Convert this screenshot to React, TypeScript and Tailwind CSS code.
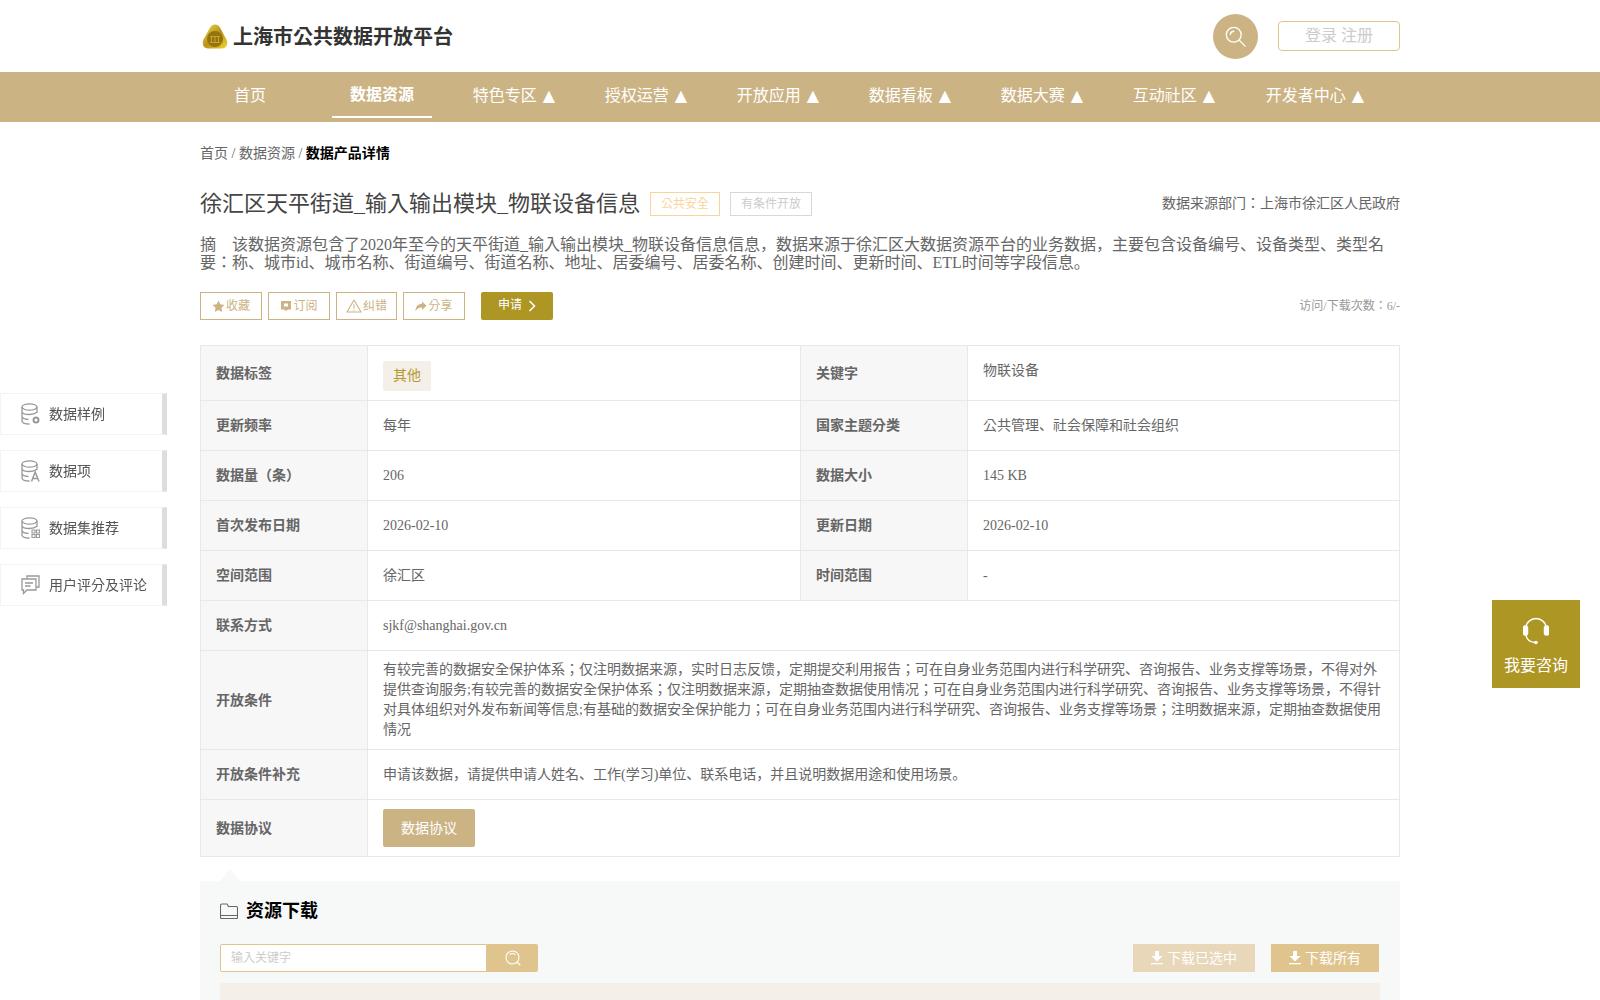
import React from "react";

const ROOT = "font-['Liberation_Serif','Noto_Sans_CJK_KR',serif]";

function Logo() {
  return (
    <svg width="26" height="25" viewBox="0 0 26 25" className="shrink-0 ml-[2px]">
      <defs>
        <linearGradient id="lg" x1="0" y1="0" x2="1" y2="1">
          <stop offset="0" stopColor="#f4e050" />
          <stop offset="0.5" stopColor="#b8921a" />
          <stop offset="1" stopColor="#f0d630" />
        </linearGradient>
      </defs>
      <path d="M13 .5c2.500 0 4 1.500 5.500 4l6 11c2 4 0 9-4.500 9H6c-4.500 0-6.500-5-4.500-9l6-11C9 2 10.500.5 13 .5z" fill="url(#lg)" />
      <circle cx="13" cy="15" r="8" fill="#94740f" />
      <path d="M8 12.500h10M9.500 12.500v6M13 12.500v6M16.500 12.500v6M8 18.500h10" stroke="#c9a42c" strokeWidth="1" fill="none" />
    </svg>
  );
}

function SearchIcon({ size = 21 }: { size?: number }) {
  return (
    <svg width={size} height={size} viewBox="0 0 24 24" fill="none" stroke="#fff" strokeWidth="1.500" strokeLinecap="round">
      <circle cx="10" cy="10" r="8.500" />
      <path d="M6 9.500A4.500 4.500 0 0 1 10 6M16 16L23 23" />
    </svg>
  );
}

const navs = ["特色专区", "授权运营", "开放应用", "数据看板", "数据大赛", "互动社区"];

function Tri() {
  return <span className="ml-[6px] font-['DejaVu_Sans',sans-serif]">▲</span>;
}

function Header() {
  return (
    <>
      <div className="w-[1200px] mx-auto h-[72px] flex items-center justify-between">
        <div className="flex items-center gap-[5px]">
          <Logo />
          <span className="pt-[2px] text-[20px] font-bold text-[#333]">上海市公共数据开放平台</span>
        </div>
        <div className="flex items-center gap-5">
          <div className="w-[45px] h-[45px] rounded-full bg-[#cbb384] flex items-center justify-center">
            <SearchIcon />
          </div>
          <div className="w-[122px] h-[30px] rounded-sm border border-[#e0c48e] text-[16px] text-[#ccc] flex items-center justify-center">登录 注册</div>
        </div>
      </div>
      <div className="h-[50px] bg-[#cbb384]">
        <div className="w-[1200px] mx-auto flex gap-8 text-white text-[16px]">
          <div className="w-[100px] h-[46px] pt-[2px] flex items-center justify-center">首页</div>
          <div className="w-[100px] h-[46px] pt-[1px] flex items-center justify-center font-bold border-b-2 border-white">数据资源</div>
          {navs.map((n) => (
            <div key={n} className="w-[100px] h-[46px] pt-[2px] flex items-center justify-center whitespace-nowrap">
              {n}
              <Tri />
            </div>
          ))}
          <div className="w-[118px] h-[46px] pt-[2px] flex items-center justify-center whitespace-nowrap">
            开发者中心
            <Tri />
          </div>
        </div>
      </div>
    </>
  );
}

function ActBtn({ icon, text, w }: { icon: React.ReactNode; text: string; w: string }) {
  return (
    <div className={`${w} h-[28px] border border-[#cbb384] text-[#cbb384] text-[12px] flex items-center justify-center gap-px`}>
      {icon}
      {text}
    </div>
  );
}

function Row({ children, h }: { children: React.ReactNode; h: string }) {
  return <div className={`flex border-b border-[#e8e8e8] last:border-b-0 ${h}`}>{children}</div>;
}

function Label({ children }: { children: React.ReactNode }) {
  return <div className="w-[167px] shrink-0 bg-[#f7f7f7] border-r border-[#e8e8e8] pl-[15px] flex items-center font-bold text-[14px] text-[#666]">{children}</div>;
}

function Value({ children }: { children: React.ReactNode }) {
  return <div className="flex-1 px-[15px] flex items-center text-[14px] text-[#666]">{children}</div>;
}

function Left({ children }: { children: React.ReactNode }) {
  return <div className="w-[433px] shrink-0 border-r border-[#e8e8e8] px-[15px] flex items-center text-[14px] text-[#666]">{children}</div>;
}

function Info() {
  return (
    <div className="border border-[#e8e8e8] mt-[25px]">
      <Row h="h-[55px]">
        <Label>数据标签</Label>
        <div className="w-[433px] shrink-0 border-r border-[#e8e8e8] px-[15px] pt-[15px]">
          <span className="inline-block h-[30px] px-[10px] leading-[30px] rounded-[2px] bg-[#f4efe8] text-[#b39a2e] text-[14px]">其他</span>
        </div>
        <Label>关键字</Label>
        <div className="flex-1 px-[15px] pt-[14px] text-[14px] text-[#666]">物联设备</div>
      </Row>
      <Row h="h-[50px]">
        <Label>更新频率</Label>
        <Left>每年</Left>
        <Label>国家主题分类</Label>
        <Value>公共管理、社会保障和社会组织</Value>
      </Row>
      <Row h="h-[50px]">
        <Label>数据量（条）</Label>
        <Left>206</Left>
        <Label>数据大小</Label>
        <Value>145 KB</Value>
      </Row>
      <Row h="h-[50px]">
        <Label>首次发布日期</Label>
        <Left>2026-02-10</Left>
        <Label>更新日期</Label>
        <Value>2026-02-10</Value>
      </Row>
      <Row h="h-[50px]">
        <Label>空间范围</Label>
        <Left>徐汇区</Left>
        <Label>时间范围</Label>
        <Value>-</Value>
      </Row>
      <Row h="h-[50px]">
        <Label>联系方式</Label>
        <Value>sjkf@shanghai.gov.cn</Value>
      </Row>
      <Row h="h-[99px]">
        <Label>开放条件</Label>
        <div className="flex-1 px-[15px] py-[9px] text-[14px] leading-[20px] text-[#666]">
          有较完善的数据安全保护体系；仅注明数据来源，实时日志反馈，定期提交利用报告；可在自身业务范围内进行科学研究、咨询报告、业务支撑等场景，不得对外提供查询服务;有较完善的数据安全保护体系；仅注明数据来源，定期抽查数据使用情况；可在自身业务范围内进行科学研究、咨询报告、业务支撑等场景，不得针对具体组织对外发布新闻等信息;有基础的数据安全保护能力；可在自身业务范围内进行科学研究、咨询报告、业务支撑等场景；注明数据来源，定期抽查数据使用情况
        </div>
      </Row>
      <Row h="h-[50px]">
        <Label>开放条件补充</Label>
        <Value>申请该数据，请提供申请人姓名、工作(学习)单位、联系电话，并且说明数据用途和使用场景。</Value>
      </Row>
      <Row h="h-[56px]">
        <Label>数据协议</Label>
        <div className="flex-1 px-[15px] flex items-center">
          <span className="w-[92px] h-[38px] rounded-[2px] bg-[#cbb384] text-white text-[14px] flex items-center justify-center">数据协议</span>
        </div>
      </Row>
    </div>
  );
}

const side = [
  { t: "数据样例", k: "gear" },
  { t: "数据项", k: "a" },
  { t: "数据集推荐", k: "grid" },
  { t: "用户评分及评论", k: "chat" },
];

function SideIcon({ k }: { k: string }) {
  if (k === "chat") {
    return (
      <svg width="19" height="20" viewBox="0 0 19 20" fill="none" stroke="#999" strokeWidth="1.300">
        <path d="M6 3.500V1h12v11h-2.500" />
        <path d="M1 4h14v11H6l-3.500 3.500V15H1z" />
        <path d="M4 8h8M4 11h5.500" />
      </svg>
    );
  }
  return (
    <svg width="19" height="22" viewBox="0 0 19 22" fill="none" stroke="#999" strokeWidth="1.300">
      <ellipse cx="8.500" cy="4" rx="7.500" ry="3.200" />
      <path d="M1 4v14c0 1.800 3 3 7.500 3M16 4v6M1 8.500c0 1.700 3 3 7.500 3 2.500 0 5.500-.6 7.500-2.200M1 13.500c0 1.500 2.500 2.700 6.500 3" />
      {k === "gear" && <circle cx="15" cy="17" r="2.500" strokeWidth="2" />}
      {k === "a" && <path d="M10.500 21.500l3.700-9.500 3.800 9.500M12 18.500h4.500" strokeWidth="1.500" />}
      {k === "grid" && <path d="M11 13h3v3h-3zM15.500 13h3v3h-3zM11 17.500h3v3h-3zM15.500 17.500h3v3h-3z" strokeWidth="1.100" />}
    </svg>
  );
}

function Sidebar() {
  return (
    <div className="fixed left-0 top-[393px] w-[167px] flex flex-col gap-[15px]">
      {side.map((s) => (
        <div key={s.t} className="h-[42px] border border-[#f3f3f3] border-r-[5px] border-r-[#dddddd] bg-white flex items-center pl-[20px] gap-[9px] text-[14px] text-[#555]">
          <SideIcon k={s.k} />
          <span>{s.t}</span>
        </div>
      ))}
    </div>
  );
}

function Download() {
  return (
    <svg width="12" height="14" viewBox="0 0 12 14" fill="#fff">
      <path d="M4 0h4v5h3.500L6 10.500.5 5H4z" />
      <rect x="0" y="12" width="12" height="1.300" />
    </svg>
  );
}

export default function App() {
  return (
    <div className={`${ROOT} h-[1000px] overflow-hidden bg-white relative`}>
      <Header />
      <div className="w-[1200px] mx-auto">
        <div className="mt-[24px] h-[16px] leading-[16px] text-[14px] text-[#666]">
          首页 / 数据资源 / <span className="font-bold text-black">数据产品详情</span>
        </div>
        <div className="mt-[28px] flex items-start h-[28px]">
          <span className="text-[22px] leading-[28px] text-[#444]">徐汇区天平街道_输入输出模块_物联设备信息</span>
          <span className="ml-[10px] mt-[2px] w-[70px] h-[24px] border border-[#fbd49b] text-[#fbd49b] text-[12px] flex items-center justify-center">公共安全</span>
          <span className="ml-[10px] mt-[2px] w-[82px] h-[24px] border border-[#d8d8d8] text-[#cccccc] text-[12px] flex items-center justify-center">有条件开放</span>
          <span className="ml-auto text-[14px] leading-[28px] text-[#666]">数据来源部门：上海市徐汇区人民政府</span>
        </div>
        <div className="mt-[18px] flex text-[16px] leading-[18px] text-[#666]">
          <div className="w-[32px] shrink-0">摘<br />要：</div>
          <div className="w-[1160px]">该数据资源包含了2020年至今的天平街道_输入输出模块_物联设备信息信息，数据来源于徐汇区大数据资源平台的业务数据，主要包含设备编号、设备类型、类型名称、城市id、城市名称、街道编号、街道名称、地址、居委编号、居委名称、创建时间、更新时间、ETL时间等字段信息。</div>
        </div>
        <div className="mt-[20px] flex items-center gap-[6px]">
          <ActBtn w="w-[62px]" text="收藏" icon={<svg width="13" height="13" viewBox="0 0 24 24" fill="#cbb384"><path d="M12 1l3.400 7 7.600 1-5.500 5.300 1.400 7.700L12 18.300 5.100 22l1.400-7.700L1 9l7.600-1z" /></svg>} />
          <ActBtn w="w-[62px]" text="订阅" icon={<svg width="12" height="12" viewBox="0 0 24 24"><path fillRule="evenodd" fill="#cbb384" d="M2 2h20v17h-6l-4 3-4-3H2zM8 7v6h8V7z" /></svg>} />
          <ActBtn w="w-[61px]" text="纠错" icon={<svg width="16" height="16" viewBox="0 0 24 24" fill="none" stroke="#cbb384" strokeWidth="1.600"><path d="M12 3L1.500 21h21zM12 9.500v6M12 17.500v1.500" /></svg>} />
          <ActBtn w="w-[62px]" text="分享" icon={<svg width="12" height="12" viewBox="0 0 24 24" fill="#cbb384"><path d="M14 3l9 8.500-9 8.500v-5C8 15 4 17 1 22c0-8 4-14 13-14.500z" /></svg>} />
          <div className="ml-[10px] w-[72px] h-[28px] rounded-[2px] bg-[#ae9625] text-white text-[12px] flex items-center justify-center gap-[6px] pb-[3px]">
            申请
            <svg width="8" height="12" viewBox="0 0 8 12" fill="none" stroke="#fff" strokeWidth="1.500" className="mt-[3px]"><path d="M1.500 1l5 5-5 5" /></svg>
          </div>
          <span className="ml-auto text-[12px] text-[#999]">访问/下载次数：6/-</span>
        </div>
        <Info />
        <div className="relative mt-[24px] h-[200px] bg-[#f7f9f9] px-[20px]">
          <div className="absolute left-[20px] -top-[12px] w-0 h-0 border-x-[10px] border-x-transparent border-b-[12px] border-b-[#f7f9f9]" />
          <div className="pt-[19px] h-[63px] flex items-start">
            <div className="flex items-center gap-[8px] h-[22px]">
              <svg width="18" height="16" viewBox="0 0 18 16" fill="none" stroke="#666" strokeWidth="1.100"><path d="M2 1h5l1.500 2.500H16a1.500 1.500 0 0 1 1.500 1.500v9.500a1 1 0 0 1-1 1h-15a1 1 0 0 1-1-1V2.500A1.500 1.500 0 0 1 2 1zM1 12.500h16" /></svg>
              <span className="text-[18px] font-bold text-black">资源下载</span>
            </div>
          </div>
          <div className="flex items-center h-[28px]">
            <div className="w-[267px] h-[28px] bg-white border border-[#e0c48e] rounded-l-[2px] pl-[10px] flex items-center text-[12px] text-[#ccc]">输入关键字</div>
            <div className="w-[51px] h-[28px] bg-[#e0c48e] rounded-r-[2px] flex items-center justify-center">
              <svg width="16" height="16" viewBox="0 0 16 16" fill="none" stroke="#fff" strokeWidth="1.100" strokeLinecap="round"><circle cx="7.500" cy="7.500" r="6.500" /><path d="M5 4.500A4 4 0 0 1 10 4.500M12 12l3 3" /></svg>
            </div>
            <div className="ml-auto w-[122px] h-[28px] bg-[#e8d7b9] text-white text-[14px] flex items-center justify-center gap-[4px]"><Download />下载已选中</div>
            <div className="ml-[16px] mr-px w-[108px] h-[28px] bg-[#e0c48e] text-white text-[14px] flex items-center justify-center gap-[4px]"><Download />下载所有</div>
          </div>
          <div className="mt-[11px] h-[40px] bg-[#f4efe8]" />
        </div>
      </div>
      <Sidebar />
      <div className="fixed left-[1492px] top-[600px] w-[88px] h-[88px] bg-[#ae9625] text-white text-[16px] flex flex-col items-center">
        <svg width="26" height="28" viewBox="0 0 26 28" fill="none" className="mt-[17px]" stroke="#fff" strokeWidth="1.500">
          <path d="M3 11a10 9.500 0 0 1 20 0" />
          <rect x="0.500" y="9" width="4" height="9" rx="2" fill="#fff" />
          <rect x="21.500" y="9" width="4" height="9" rx="2" fill="#fff" />
          <path d="M3 18c.5 4 4 7 9 7.500" />
          <circle cx="13" cy="25.500" r="1.800" fill="#fff" stroke="none" />
        </svg>
        <span className="mt-[11px] leading-[20px]">我要咨询</span>
      </div>
    </div>
  );
}
